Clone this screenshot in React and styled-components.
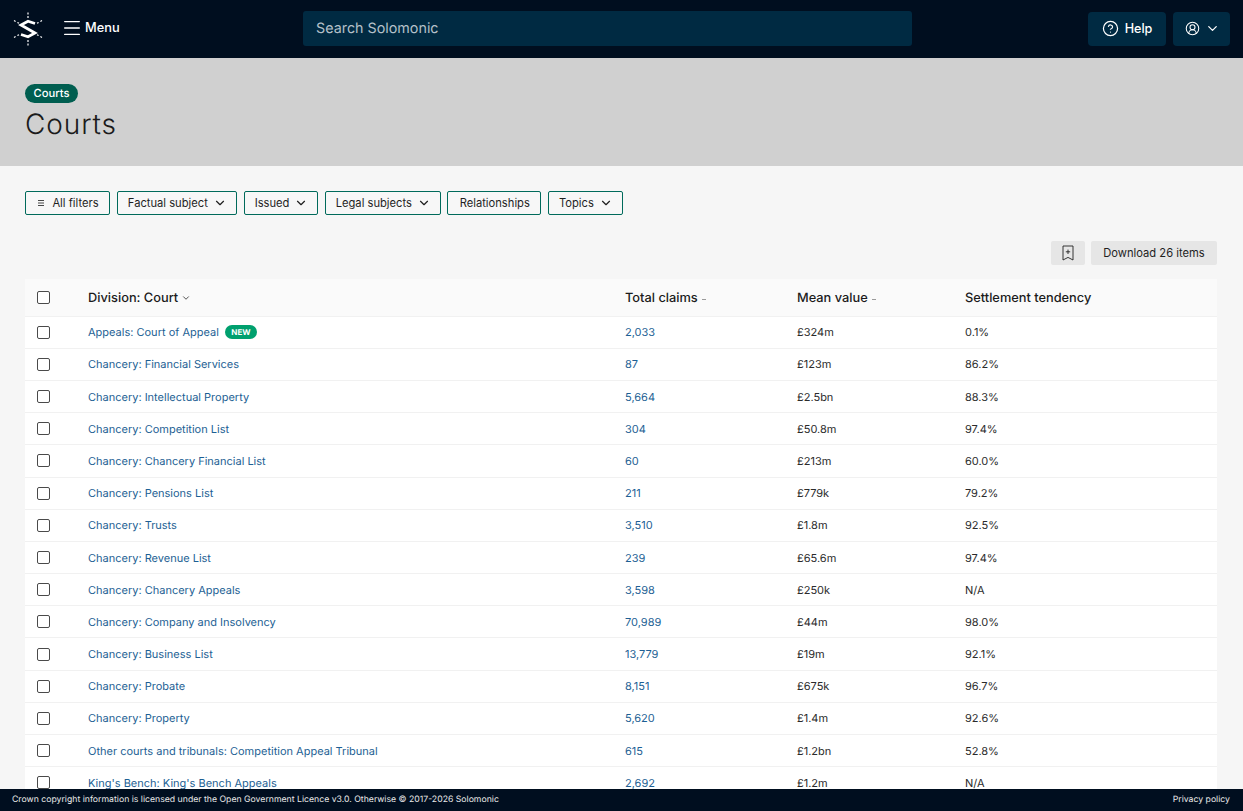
import React from "react";
import styled, { createGlobalStyle } from "styled-components";
import { ChevronDown, CircleHelp, CircleUserRound, Menu as MenuIcon } from "lucide-react";

const GlobalStyle = createGlobalStyle`
  * {
    box-sizing: border-box;
  }

  html,
  body {
    margin: 0;
    height: 100%;
    overflow: hidden;
    font-family: Inter, "Liberation Sans", sans-serif;
    text-rendering: geometricPrecision;
    color: #1b1b1b;
    background: #f6f6f6;
  }
`;

const Page = styled.div`
  display: flex;
  flex-direction: column;
  height: 100vh;
`;

const TopBar = styled.header`
  flex: none;
  display: flex;
  align-items: center;
  height: 58px;
  padding: 0 13px 1px;
  background: #000e1f;
  color: #ffffff;
`;

const Logo = styled.svg`
  flex: none;
  width: 30px;
  height: 34px;
`;

const MenuButton = styled.button`
  display: flex;
  align-items: center;
  gap: 2px;
  margin: 0 0 1px 18px;
  padding: 0;
  border: 0;
  background: none;
  color: #ffffff;
  font: 500 12.8px/16px Inter, sans-serif;
`;

const Search = styled.div`
  display: flex;
  align-items: center;
  width: 609px;
  height: 35px;
  margin-left: 183px;
  padding: 0 13.5px;
  border-radius: 3px;
  background: #002a42;
  color: #b4c0c9;
  font-size: 14.3px;
`;

const BarActions = styled.div`
  display: flex;
  gap: 7px;
  margin-left: auto;
`;

const BarButton = styled.button`
  display: flex;
  align-items: center;
  justify-content: center;
  gap: ${(p) => p.$gap}px;
  width: ${(p) => p.$width}px;
  height: 34px;
  padding: 0 0 0 ${(p) => p.$shift || 0}px;
  border: 0;
  border-radius: 4px;
  background: #002a42;
  color: #ffffff;
  font: 500 12.6px/16px Inter, sans-serif;
`;

const Band = styled.section`
  flex: none;
  height: 108px;
  padding: 26px 25px 0;
  background: #d0d0d0;
`;

const Pill = styled.span`
  display: inline-block;
  height: 19px;
  padding: 0 8.5px;
  border-radius: 10px;
  background: #005e50;
  color: #ffffff;
  font-size: 11.2px;
  font-weight: 500;
  line-height: 18px;
  vertical-align: top;
`;

const Title = styled.h1`
  margin: 5px 0 0;
  font-size: 28px;
  font-weight: 300;
  line-height: 30px;
  letter-spacing: 0.9px;
  color: #1b1b1b;
`;

const Main = styled.main`
  flex: 1;
  min-height: 0;
  overflow: hidden;
  padding: 25px 26px 0 25px;
`;

const Filters = styled.div`
  display: flex;
  gap: 6.6px;
`;

const FilterButton = styled.button`
  display: flex;
  align-items: center;
  justify-content: center;
  gap: ${(p) => p.$gap}px;
  width: ${(p) => p.$width}px;
  height: 24px;
  padding: 0 0 0 1px;
  border: 1px solid #006a5b;
  border-radius: 2px;
  background: #f7f7f7;
  color: #1f1f1f;
  font: 400 11.2px/14px Inter, sans-serif;
`;

const FilterLines = styled.svg`
  width: 8px;
  height: 8px;
  margin-right: 1px;
`;

const Tools = styled.div`
  display: flex;
  justify-content: flex-end;
  gap: 6px;
  margin-top: 26px;
`;

const ToolButton = styled.button`
  display: flex;
  align-items: center;
  justify-content: center;
  width: ${(p) => p.$width}px;
  height: 24px;
  padding: 0;
  border: 0;
  border-radius: 2px;
  background: #e6e6e6;
  color: #1f1f1f;
  font: 400 11.2px/14px Inter, sans-serif;
`;

const Table = styled.div`
  margin-top: 14px;
  background: #ffffff;
`;

const Row = styled.div`
  display: grid;
  grid-template-columns: 51px 537px 172px 168px 1fr;
  align-items: center;
  height: ${(p) => (p.$head ? "37.6px" : "32.2px")};
  padding-left: 12px;
  border-bottom: 1px solid #f1f1f1;
  background: ${(p) => (p.$head ? "#fafafa" : "#ffffff")};
  font-size: 11px;
  color: #2b2b2b;
`;

const Checkbox = styled.span`
  display: block;
  width: 13px;
  height: 13px;
  border: 1px solid #4a4a4a;
  border-radius: 2px;
  background: #ffffff;
`;

const HeadCell = styled.div`
  display: flex;
  align-items: center;
  gap: 3px;
  padding-top: 2px;
  font-size: 12.8px;
  font-weight: 500;
  color: #1b1b1b;
`;

const SortDash = styled.span`
  width: 4px;
  height: 1px;
  margin-left: 1px;
  margin-top: 2px;
  background: #9a9a9a;
`;

const CellLink = styled.a`
  color: #1d5f94;
  text-decoration: none;
`;

const NameCell = styled.div`
  display: flex;
  align-items: center;
  gap: 6px;
`;

const NewBadge = styled.span`
  height: 14px;
  padding: 0 6.5px;
  border-radius: 7px;
  background: #00a06e;
  color: #ffffff;
  font-size: 8px;
  font-weight: 700;
  line-height: 14px;
`;

const Footer = styled.footer`
  flex: none;
  display: flex;
  justify-content: space-between;
  align-items: center;
  height: 22px;
  padding: 0 13px 0 12px;
  background: #000e1f;
  color: #e8e8e8;
  font-size: 8.7px;
`;

const courts = [
  ["Appeals: Court of Appeal", "2,033", "£324m", "0.1%", true],
  ["Chancery: Financial Services", "87", "£123m", "86.2%"],
  ["Chancery: Intellectual Property", "5,664", "£2.5bn", "88.3%"],
  ["Chancery: Competition List", "304", "£50.8m", "97.4%"],
  ["Chancery: Chancery Financial List", "60", "£213m", "60.0%"],
  ["Chancery: Pensions List", "211", "£779k", "79.2%"],
  ["Chancery: Trusts", "3,510", "£1.8m", "92.5%"],
  ["Chancery: Revenue List", "239", "£65.6m", "97.4%"],
  ["Chancery: Chancery Appeals", "3,598", "£250k", "N/A"],
  ["Chancery: Company and Insolvency", "70,989", "£44m", "98.0%"],
  ["Chancery: Business List", "13,779", "£19m", "92.1%"],
  ["Chancery: Probate", "8,151", "£675k", "96.7%"],
  ["Chancery: Property", "5,620", "£1.4m", "92.6%"],
  ["Other courts and tribunals: Competition Appeal Tribunal", "615", "£1.2bn", "52.8%"],
  ["King's Bench: King's Bench Appeals", "2,692", "£1.2m", "N/A"],
];

const filters = [
  ["Factual subject", 120.5, true],
  ["Issued", 74.7, true],
  ["Legal subjects", 115.7, true],
  ["Relationships", 94, false],
  ["Topics", 75, true],
];

// ticks around the S, dotted like the reference mark
const SolomonicLogo = () => (
  <Logo viewBox="0 0 30 34" fill="none" stroke="#ffffff">
    <path d="M22 11.5 15 9.2 8 13 22 21 15 24.8 8 22.5" strokeWidth="2.8" />
    <path
      d="M15 0.5v2M15 4v2M15 28v2M15 31.5v2M1 8.5l1.6.9M4.4 10.4l1.6.9M29 8.5l-1.6.9M25.6 10.4l-1.6.9M1 25.5l1.6-.9M4.4 23.6l1.6-.9M29 25.5l-1.6-.9M25.6 23.6l-1.6-.9"
      strokeWidth="1.2"
    />
  </Logo>
);

const BookmarkPlus = () => (
  <svg width="14" height="16" viewBox="0 0 14 16" fill="none" stroke="#222" strokeWidth="0.9">
    <path d="M2 1h10v14l-5-2.6L2 15zM7 4.6v4.4M4.8 6.8h4.4" />
  </svg>
);

const App = () => {
  return (
    <Page>
      <GlobalStyle />
      <TopBar>
        <SolomonicLogo />
        <MenuButton>
          <MenuIcon size={22} strokeWidth={1.4} />
          Menu
        </MenuButton>
        <Search>Search Solomonic</Search>
        <BarActions>
          <BarButton $width={78} $gap={6}>
            <CircleHelp size={17} strokeWidth={1.7} />
            Help
          </BarButton>
          <BarButton $width={57} $gap={5} $shift={2}>
            <CircleUserRound size={15} strokeWidth={1.7} />
            <ChevronDown size={15} strokeWidth={2} />
          </BarButton>
        </BarActions>
      </TopBar>

      <Band>
        <Pill>Courts</Pill>
        <Title>Courts</Title>
      </Band>

      <Main>
        <Filters>
          <FilterButton $width={85} $gap={6}>
            <FilterLines viewBox="0 0 8 8" stroke="#333" strokeWidth="0.9">
              <path d="M1 1.5h6M1 4h6M1 6.5h6" />
            </FilterLines>
            All filters
          </FilterButton>
          {filters.map(([label, width, hasMenu]) => (
            <FilterButton key={label} $width={width} $gap={5}>
              {label}
              {hasMenu && <ChevronDown size={14} strokeWidth={2} />}
            </FilterButton>
          ))}
        </Filters>

        <Tools>
          <ToolButton $width={34}>
            <BookmarkPlus />
          </ToolButton>
          <ToolButton $width={126}>Download 26 items</ToolButton>
        </Tools>

        <Table>
          <Row $head>
            <Checkbox />
            <HeadCell>
              Division: Court
              <ChevronDown size={10} strokeWidth={1.8} />
            </HeadCell>
            <HeadCell>
              Total claims
              <SortDash />
            </HeadCell>
            <HeadCell>
              Mean value
              <SortDash />
            </HeadCell>
            <HeadCell>Settlement tendency</HeadCell>
          </Row>
          {courts.map(([name, claims, mean, tendency, isNew]) => (
            <Row key={name}>
              <Checkbox />
              <NameCell>
                <CellLink href="#court">{name}</CellLink>
                {isNew && <NewBadge>NEW</NewBadge>}
              </NameCell>
              <CellLink href="#claims">{claims}</CellLink>
              <div>{mean}</div>
              <div>{tendency}</div>
            </Row>
          ))}
        </Table>
      </Main>

      <Footer>
        <span>Crown copyright information is licensed under the Open Government Licence v3.0. Otherwise © 2017-2026 Solomonic</span>
        <span>Privacy policy</span>
      </Footer>
    </Page>
  );
};

export default App;
